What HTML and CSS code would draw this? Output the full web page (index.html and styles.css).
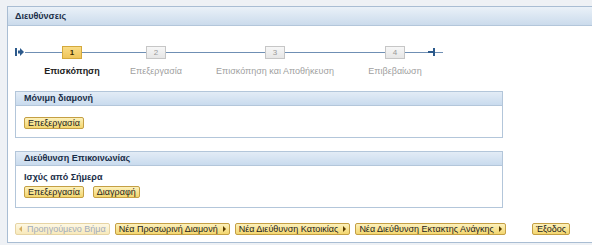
FILE: index.html
```html
<!DOCTYPE html>
<html lang="el">
<head>
    <meta charset="UTF-8">
    <title>Διευθύνσεις</title>
    <link rel="stylesheet" href="styles.css">
</head>
<body>
    <div class="panel">
        <div class="panel-title">Διευθύνσεις</div>
        <div class="panel-body">
            <div class="roadmap">
                <div class="road-start">
                    <svg width="9" height="8" viewBox="0 0 9 8"><rect x="0" y="0" width="2" height="8" fill="#2c5a8c"/><path d="M3 2.5h2V0l4 4-4 4V5.5H3z" fill="#2c5a8c"/></svg>
                </div>
                <div class="step active s1">
                    <div class="step-box">1</div>
                    <div class="step-label">Επισκόπηση</div>
                </div>
                <div class="step s2">
                    <div class="step-box">2</div>
                    <div class="step-label">Επεξεργασία</div>
                </div>
                <div class="step s3">
                    <div class="step-box">3</div>
                    <div class="step-label">Επισκόπηση και Αποθήκευση</div>
                </div>
                <div class="step s4">
                    <div class="step-box">4</div>
                    <div class="step-label">Επιβεβαίωση</div>
                </div>
                <div class="road-end"></div>
            </div>

            <div class="group">
                <div class="group-title">Μόνιμη διαμονή</div>
                <div class="group-body">
                    <button class="btn">Επεξεργασία</button>
                </div>
            </div>

            <div class="group second">
                <div class="group-title">Διεύθυνση Επικοινωνίας</div>
                <div class="group-body">
                    <div class="valid">Ισχύς από Σήμερα</div>
                    <div class="btn-row">
                        <button class="btn">Επεξεργασία</button>
                        <button class="btn">Διαγραφή</button>
                    </div>
                </div>
            </div>

            <div class="actions">
                <button class="btn disabled"><span class="arr left"></span>Προηγούμενο Βήμα</button>
                <button class="btn">Νέα Προσωρινή Διαμονή<span class="arr right"></span></button>
                <button class="btn">Νέα Διεύθυνση Κατοικίας<span class="arr right"></span></button>
                <button class="btn">Νέα Διεύθυνση Εκτακτης Ανάγκης<span class="arr right"></span></button>
                <button class="btn exit">Έξοδος</button>
            </div>
        </div>
    </div>
</body>
</html>
```

FILE: styles.css
```css
body {
    margin: 0;
    padding: 6px 0 0 7px;
    background-color: #eef1f5;
    font-family: 'Liberation Sans', Arial, sans-serif;
    font-size: 9px;
    color: #222;
    overflow: hidden;
}
.panel {
    border: 1px solid #a9bdd3;
    border-right: none;
    background-color: #fff;
    height: 237px;
    box-sizing: border-box;
}
.panel-title {
    height: 18px;
    line-height: 18px;
    padding-left: 7px;
    font-size: 9px;
    font-weight: bold;
    color: #1a2e48;
    background: linear-gradient(#eaf1f8, #cbdbec);
    border-bottom: 1px solid #b3c6da;
}

/* roadmap */
.roadmap {
    display: flex;
    align-items: flex-start;
    height: 65px;
    background: linear-gradient(#6f8fb4, #6f8fb4) no-repeat 17px 26px / 418px 1px;
}
.road-start {
    width: 9px;
    height: 8px;
    margin: 22px 0 0 7px;
    line-height: 0;
}
.step {
    display: flex;
    flex-direction: column;
    align-items: center;
    flex-shrink: 0;
    color: #a0a0a0;
}
.s1 { width: 60px; margin-left: 18px; }
.s2 { width: 108px; }
.s3 { width: 130px; }
.s4 { width: 80px; margin-left: 15px; }
.step-box {
    width: 20px;
    height: 13px;
    box-sizing: border-box;
    margin-top: 20px;
    line-height: 11px;
    text-align: center;
    font-size: 8px;
    border: 1px solid #c6c6c6;
    background: linear-gradient(#f7f7f7, #e6e6e6);
    color: #9a9a9a;
}
.step-label {
    margin-top: 7px;
    white-space: nowrap;
    line-height: 11px;
}
.step.active .step-box {
    border-color: #d4a93c;
    background: linear-gradient(#f9dc86, #efc55a);
    color: #3a2c00;
    font-weight: bold;
}
.step.active .step-label {
    color: #222;
    font-weight: bold;
}
.road-end {
    position: relative;
    width: 2px;
    height: 8px;
    margin: 22px 0 0 -2px;
    background-color: #2c5a8c;
}
.road-end::before {
    content: "";
    position: absolute;
    left: -5px;
    top: 3px;
    width: 5px;
    height: 2px;
    background-color: #2c5a8c;
}

/* groups */
.group {
    width: 488px;
    margin-left: 7px;
    border: 1px solid #b3c6da;
    box-sizing: border-box;
}
.group.second {
    margin-top: 13px;
}
.group-title {
    height: 13px;
    line-height: 13px;
    padding-left: 8px;
    font-weight: bold;
    color: #1a2e48;
    background: linear-gradient(#e3ecf6, #c9dbee);
    border-bottom: 1px solid #b3c6da;
}
.group-body {
    padding: 11px 8px 8px;
}
.second .group-body {
    padding-top: 6px;
    padding-bottom: 9px;
}
.valid {
    font-weight: bold;
    line-height: 11px;
    color: #1a2e48;
    margin-bottom: 3px;
}
.btn-row {
    display: flex;
    gap: 9px;
}

/* buttons */
.btn {
    display: flex;
    align-items: center;
    flex-shrink: 0;
    white-space: nowrap;
    height: 12px;
    box-sizing: border-box;
    margin: 0;
    padding: 0 3px;
    font-family: inherit;
    font-size: 9px;
    line-height: 10px;
    color: #1d1d1d;
    border: 1px solid #c49f44;
    border-radius: 2px;
    background: linear-gradient(#fdf1bb, #f3d66f);
    cursor: pointer;
}
.btn.disabled {
    color: #a2acbb;
    border-color: #e6d4a4;
    background: linear-gradient(#fef8e3, #f8e9bb);
}
.arr {
    display: inline-block;
    width: 0;
    height: 0;
    border-top: 3px solid transparent;
    border-bottom: 3px solid transparent;
}
.arr.right {
    margin-left: 5px;
    border-left: 3px solid #5b3d00;
}
.arr.left {
    margin-right: 5px;
    border-right: 3px solid #d6b064;
}
.actions {
    display: flex;
    gap: 5px;
    margin: 15px 0 0 7px;
}
.actions .exit {
    margin-left: 21px;
}
```
